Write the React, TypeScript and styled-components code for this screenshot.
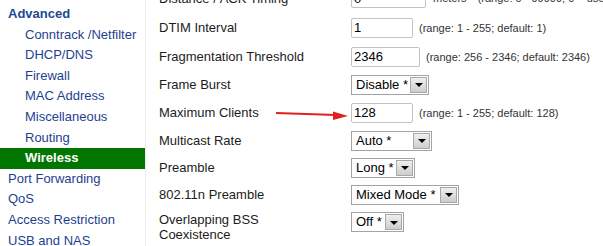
import React from "react";
import styled, { createGlobalStyle } from "styled-components";

const Global = createGlobalStyle`
  html, body { margin: 0; padding: 0; background: #fff; }
  body { font-family: "Liberation Sans", Arial, sans-serif; }
`;

const Page = styled.div`
  position: relative;
  display: flex;
  width: 603px;
  height: 246px;
  overflow: hidden;
  background: #fff;
`;

const Sidebar = styled.nav`
  flex: 0 0 145px;
  width: 145px;
  border-right: 1px solid #ececec;
  padding-top: 4px;
  box-sizing: content-box;
`;

const NavItem = styled.div<{ $indent: number; $header?: boolean; $active?: boolean }>`
  height: 20.6px;
  line-height: 20.6px;
  padding-left: ${(p) => p.$indent}px;
  font-size: 13px;
  white-space: nowrap;
  font-weight: ${(p) => (p.$header || p.$active ? "bold" : "normal")};
  color: ${(p) => (p.$active ? "#ffffff" : p.$header ? "#1d4a8e" : "#1e3f8f")};
  background: ${(p) => (p.$active ? "#017601" : "transparent")};
`;

const Main = styled.main`
  flex: 1;
  padding-left: 13px;
  overflow: hidden;
`;

const Table = styled.div`
  margin-top: -17px;
  display: flex;
  flex-direction: column;
`;

const Row = styled.div<{ $h?: number; $top?: boolean }>`
  display: grid;
  grid-template-columns: 192px 1fr;
  height: ${(p) => (p.$h ? `${p.$h}px` : "auto")};
  align-items: ${(p) => (p.$top ? "start" : "center")};
`;

const Label = styled.div<{ $pad?: number }>`
  font-size: 13px;
  line-height: 15px;
  color: #1c1c1c;
  max-width: 170px;
  padding-top: ${(p) => p.$pad ?? 0}px;
`;

const Cell = styled.div<{ $pad?: number }>`
  display: flex;
  align-items: center;
  white-space: nowrap;
  padding-top: ${(p) => p.$pad ?? 0}px;
`;

const TextBox = styled.input<{ $w: number }>`
  box-sizing: border-box;
  width: ${(p) => p.$w}px;
  height: 20px;
  margin: 0;
  padding: 0 0 0 2px;
  border: 1px solid #c2c2c2;
  border-radius: 2px;
  font-family: "Liberation Sans", Arial, sans-serif;
  font-size: 13px;
  color: #000;
  background: #fff;
  outline: none;
`;

const Hint = styled.span<{ $gap?: number }>`
  margin-left: ${(p) => p.$gap ?? 6}px;
  font-size: 11px;
  color: #333;
`;

const SelectBox = styled.div<{ $w: number }>`
  box-sizing: border-box;
  width: ${(p) => p.$w}px;
  height: 20px;
  display: flex;
  align-items: stretch;
  border: 1px solid #a3a3a3;
  background: #fff;
`;

const SelectText = styled.span`
  flex: 1;
  padding-left: 4px;
  font-size: 13px;
  line-height: 18px;
  color: #000;
`;

const ArrowBtn = styled.span`
  box-sizing: border-box;
  width: 17px;
  margin: 1px;
  border: 1px solid #a8a8a8;
  background: linear-gradient(#efefef, #cdcdcd);
  display: flex;
  align-items: center;
  justify-content: center;
  &::after {
    content: "";
    width: 0;
    height: 0;
    border-left: 4px solid transparent;
    border-right: 4px solid transparent;
    border-top: 4px solid #000;
    margin-top: 1px;
  }
`;

const Pointer = styled.svg`
  position: absolute;
  left: 270px;
  top: 104px;
  pointer-events: none;
`;

const nav = [
  { t: "Advanced", i: 8, h: true },
  { t: "Conntrack /Netfilter", i: 25 },
  { t: "DHCP/DNS", i: 25 },
  { t: "Firewall", i: 25 },
  { t: "MAC Address", i: 25 },
  { t: "Miscellaneous", i: 25 },
  { t: "Routing", i: 25 },
  { t: "Wireless", i: 25, a: true },
  { t: "Port Forwarding", i: 8 },
  { t: "QoS", i: 8 },
  { t: "Access Restriction", i: 8 },
  { t: "USB and NAS", i: 8 },
];

const Select = ({ w, v }: { w: number; v: string }) => (
  <SelectBox $w={w}>
    <SelectText>{v}</SelectText>
    <ArrowBtn />
  </SelectBox>
);

export default function App() {
  return (
    <>
      <Global />
      <Page>
        <Sidebar>
          {nav.map((n) => (
            <NavItem key={n.t} $indent={n.i} $header={n.h} $active={n.a}>
              {n.t}
            </NavItem>
          ))}
        </Sidebar>
        <Main>
          <Table>
            <Row $h={30}>
              <Label>Distance / ACK Timing</Label>
              <Cell>
                <TextBox $w={75} defaultValue="0" />
                <Hint $gap={7}>meters</Hint>
                <Hint $gap={11}>(range: 0 - 99999; 0 = use default)</Hint>
              </Cell>
            </Row>
            <Row $h={29}>
              <Label>DTIM Interval</Label>
              <Cell>
                <TextBox $w={62} defaultValue="1" />
                <Hint>(range: 1 - 255; default: 1)</Hint>
              </Cell>
            </Row>
            <Row $h={29}>
              <Label>Fragmentation Threshold</Label>
              <Cell>
                <TextBox $w={69} defaultValue="2346" />
                <Hint>(range: 256 - 2346; default: 2346)</Hint>
              </Cell>
            </Row>
            <Row $h={27}>
              <Label>Frame Burst</Label>
              <Cell>
                <Select w={78} v="Disable *" />
              </Cell>
            </Row>
            <Row $h={29}>
              <Label>Maximum Clients</Label>
              <Cell>
                <TextBox $w={62} defaultValue="128" />
                <Hint>(range: 1 - 255; default: 128)</Hint>
              </Cell>
            </Row>
            <Row $h={27}>
              <Label>Multicast Rate</Label>
              <Cell>
                <Select w={81} v="Auto *" />
              </Cell>
            </Row>
            <Row $h={27}>
              <Label>Preamble</Label>
              <Cell>
                <Select w={64} v="Long *" />
              </Cell>
            </Row>
            <Row $h={27}>
              <Label>802.11n Preamble</Label>
              <Cell>
                <Select w={108} v="Mixed Mode *" />
              </Cell>
            </Row>
            <Row $top>
              <Label $pad={4}>Overlapping BSS Coexistence</Label>
              <Cell $pad={4}>
                <Select w={53} v="Off *" />
              </Cell>
            </Row>
          </Table>
        </Main>
        <Pointer width="80" height="20" viewBox="0 0 80 20">
          <line x1="6" y1="9" x2="66" y2="11" stroke="#e3201d" strokeWidth="2" />
          <polygon points="63,7.5 78,12 63,16" fill="#e3201d" />
        </Pointer>
      </Page>
    </>
  );
}
